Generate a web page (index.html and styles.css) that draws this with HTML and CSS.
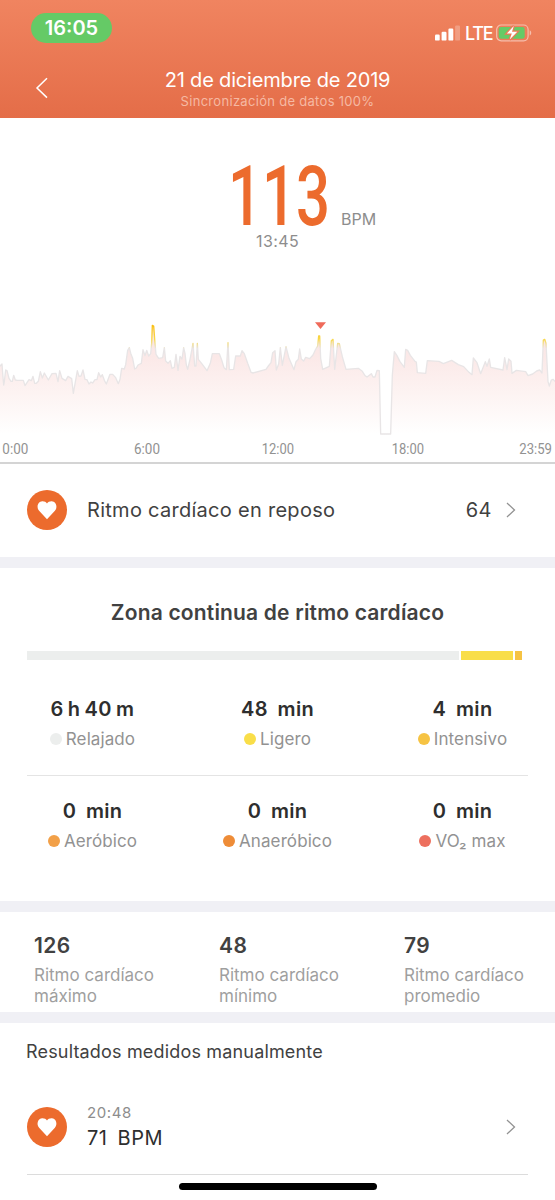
FILE: index.html
```html
<!DOCTYPE html>
<html lang="es">
<head>
    <meta charset="UTF-8">
    <meta name="viewport" content="width=device-width, initial-scale=1.0">
    <title>Ritmo cardíaco</title>
    <link rel="stylesheet" href="styles.css">
</head>
<body>
    <header class="header">
        <div class="status-bar">
            <span class="clock">16:05</span>
            <div class="status-icons">
                <svg class="signal" width="25" height="16" viewBox="0 0 25 16">
                    <rect x="0" y="9.6" width="4.7" height="6" rx="1.2" fill="#fff"/>
                    <rect x="6.6" y="6.7" width="4.9" height="8.9" rx="1.2" fill="#fff"/>
                    <rect x="13.4" y="3.6" width="4.9" height="12" rx="1.2" fill="#fff"/>
                    <rect x="20.1" y="0.4" width="4.9" height="15.2" rx="1.2" fill="#fff" opacity="0.25"/>
                </svg>
                <span class="network">LTE</span>
                <svg class="battery" width="36" height="18" viewBox="0 0 36 18">
                    <rect x="0.7" y="1" width="31.4" height="15.8" rx="4.5" fill="none" stroke="#fff" stroke-opacity="0.5" stroke-width="1.2"/>
                    <rect x="2.7" y="3" width="26" height="11.8" rx="2.4" fill="#65ca66"/>
                    <path d="M33.7 6.3v5.2c2-.8 2-4.4 0-5.2z" fill="#fff" opacity="0.5"/>
                    <path d="M17.8 2L10.8 9.6h5L13.7 15.6 21.3 7.8h-5.3z" fill="#fff" stroke="#eb7a55" stroke-width="2.4"/>
                    <path d="M17.8 2L10.8 9.6h5L13.7 15.6 21.3 7.8h-5.3z" fill="#fff"/>
                </svg>
            </div>
        </div>
        <div class="nav">
            <svg class="back" width="14" height="22" viewBox="0 0 14 22">
                <path d="M12 1.2L2 11l10 9.6" fill="none" stroke="#fff" stroke-width="1.5"/>
            </svg>
            <h1>21 de diciembre de 2019</h1>
            <p>Sincronización de datos 100%</p>
        </div>
    </header>

    <section class="current">
        <div class="bpm">
            <svg width="102" height="64" viewBox="0 0 102 64">
                <text x="-2" y="62" class="big" textLength="102" lengthAdjust="spacingAndGlyphs">113</text>
            </svg>
            <span>BPM</span>
        </div>
        <div class="time">13:45</div>
    </section>

    <svg class="chart" width="555" height="154" viewBox="0 0 1665 462">
        <defs>
            <linearGradient id="area" gradientUnits="userSpaceOnUse" x1="0" y1="46" x2="0" y2="372">
                <stop offset="0" stop-color="#fae3e2"/>
                <stop offset="0.3" stop-color="#fbe9e8"/>
                <stop offset="0.65" stop-color="#fdf4f3"/>
                <stop offset="1" stop-color="#ffffff"/>
            </linearGradient>
            <linearGradient id="line" gradientUnits="userSpaceOnUse" x1="0" y1="46" x2="0" y2="116">
                <stop offset="0" stop-color="#fabf12"/>
                <stop offset="0.6" stop-color="#f8d84a"/>
                <stop offset="1" stop-color="#e8e5e6"/>
            </linearGradient>
        </defs>
        <path fill="url(#area)" stroke="url(#line)" stroke-width="4" stroke-linejoin="round" d="M-10 372V168H0L6 162 8 190 11 225 13 215 17 180 21 182 27 205 33 214 37 214 41 196 46 210 52 211 70 211 75 227 87 209 94 212 99 199 104 220 109 220 115 214 121 185 127 204 133 189 145 210 156 191 168 190 174 215 179 182 186 205 197 212 204 199 215 206 220 250 232 182 237 199 243 198 249 180 255 208 261 209 267 222 273 216 278 219 285 209 291 209 296 188 302 201 307 194 313 211 319 222 330 193 338 193 347 203 355 221 360 208 365 175 373 177 377 164 383 121 388 113 393 133 398 145 404 177 409 174 414 165 424 160 429 119 435 137 440 121 446 138 452 131 455 100 457 46 461 48 465 100 468 133 476 145 488 143 493 113 497 153 504 160 511 152 516 175 523 172 528 133 534 181 540 139 546 147 551 113
            555 130 559 165 563 178 570 148 579 100 584 168 588 168 592 100 595 148 603 158 621 182 631 160 637 131 658 131 665 150 672 173 679 179 684 98 688 179 701 178 707 138 721 138 726 122 733 131 743 160 753 187 759 189 798 178 805 168 813 158 818 128 825 122 829 180 836 162 841 113 847 166 858 110 867 145 882 179 888 155 895 148 899 117 904 147 911 153 917 142 929 146 939 135 947 118 953 108 956 78 959 78 962 145 968 178 988 169 994 92 999 88 1004 178 1013 100 1018 101 1027 140 1038 178 1075 175 1087 184
            1095 197 1101 201 1114 191 1119 201 1125 201 1131 181 1138 182 1142 372 1172 372 1177 195 1183 125 1191 137 1200 155 1213 172 1217 118 1223 121 1231 136 1245 154 1249 156 1252 188 1277 190 1282 152 1317 154 1330 161 1355 151 1375 164 1391 170 1407 187 1416 194 1420 144 1431 158 1442 191 1456 155 1461 169 1468 147 1472 172 1509 180 1514 143 1521 179 1526 147 1533 154 1536 190 1549 181 1577 185 1584 197 1598 192 1610 183 1619 180 1626 189 1630 90 1634 88 1638 100 1644 215 1648 228 1654 210 1659 208 1665 214 1675 214V372"/>
        <path d="M945 37h33l-16.5 20z" fill="#ef6a5a"/>
        <g class="axis">
            <text x="7" y="432" textLength="78" lengthAdjust="spacingAndGlyphs">0:00</text>
            <text x="402" y="432" textLength="78" lengthAdjust="spacingAndGlyphs">6:00</text>
            <text x="785" y="432" textLength="97" lengthAdjust="spacingAndGlyphs">12:00</text>
            <text x="1175" y="432" textLength="97" lengthAdjust="spacingAndGlyphs">18:00</text>
            <text x="1558" y="432" textLength="98" lengthAdjust="spacingAndGlyphs">23:59</text>
        </g>
        <rect x="0" y="457" width="1665" height="4" fill="#bfbfbf"/>
    </svg>

    <section class="resting">
        <svg class="heart" width="40" height="40" viewBox="0 0 40 40">
            <circle cx="20" cy="20" r="20" fill="#ec6b2d"/>
            <path d="M20 29.2L12.1 20.8C9 17.2 10.9 11.4 15.3 11.3 17.4 11.2 19 12.1 20 13.5 21 12.1 22.6 11.2 24.7 11.3 29.1 11.4 31 17.2 27.9 20.8Z" fill="#fff"/>
        </svg>
        <span class="label">Ritmo cardíaco en reposo</span>
        <span class="value">64</span>
        <svg class="arrow" width="10" height="16" viewBox="0 0 10 16">
            <path d="M1 1l7.5 7L1 15" fill="none" stroke="#929292" stroke-width="1.3"/>
        </svg>
    </section>

    <section class="zones">
        <h2>Zona continua de ritmo cardíaco</h2>
        <div class="zone-bar">
            <span class="relaxed"></span>
            <span class="light"></span>
            <span class="intense"></span>
        </div>
        <div class="zone-row">
            <div class="zone">
                <strong class="hours">6 h 40 m</strong>
                <p><i class="relaxed"></i>Relajado</p>
            </div>
            <div class="zone">
                <strong>48 min</strong>
                <p><i class="light"></i>Ligero</p>
            </div>
            <div class="zone">
                <strong>4 min</strong>
                <p><i class="intense"></i>Intensivo</p>
            </div>
        </div>
        <div class="zone-row second">
            <div class="zone">
                <strong>0 min</strong>
                <p><i class="aerobic"></i>Aeróbico</p>
            </div>
            <div class="zone">
                <strong>0 min</strong>
                <p><i class="anaerobic"></i>Anaeróbico</p>
            </div>
            <div class="zone">
                <strong>0 min</strong>
                <p><i class="vo2"></i>VO₂ max</p>
            </div>
        </div>
    </section>

    <section class="stats">
        <div>
            <strong>126</strong>
            <p>Ritmo cardíaco máximo</p>
        </div>
        <div>
            <strong>48</strong>
            <p>Ritmo cardíaco mínimo</p>
        </div>
        <div>
            <strong>79</strong>
            <p>Ritmo cardíaco promedio</p>
        </div>
    </section>

    <section class="manual">
        <h3>Resultados medidos manualmente</h3>
        <div class="result">
            <svg class="heart" width="40" height="40" viewBox="0 0 40 40">
                <circle cx="20" cy="20" r="20" fill="#ec6b2d"/>
                <path d="M20 29.2L12.1 20.8C9 17.2 10.9 11.4 15.3 11.3 17.4 11.2 19 12.1 20 13.5 21 12.1 22.6 11.2 24.7 11.3 29.1 11.4 31 17.2 27.9 20.8Z" fill="#fff"/>
            </svg>
            <div class="result-text">
                <span class="result-time">20:48</span>
                <span class="result-value">71 BPM</span>
            </div>
            <svg class="arrow" width="10" height="16" viewBox="0 0 10 16">
                <path d="M1 1l7.5 7L1 15" fill="none" stroke="#929292" stroke-width="1.3"/>
            </svg>
        </div>
        <div class="home-bar"></div>
    </section>
</body>
</html>
```
FILE: styles.css
```css
* {
    box-sizing: border-box;
    margin: 0;
    padding: 0;
}

body {
    width: 555px;
    height: 1200px;
    overflow: hidden;
    font-family: Inter, "Liberation Sans", sans-serif;
    background-color: #fff;
    color: #414141;
}

svg {
    display: block;
    flex: none;
}

.header {
    height: 118px;
    background: linear-gradient(#f08460, #e46d48);
    color: white;
}

.status-bar {
    height: 57px;
    padding: 13px 23px 0 31px;
    display: flex;
    justify-content: space-between;
}

.clock {
    width: 81px;
    height: 30px;
    border-radius: 15px;
    background-color: #65ca66;
    font-size: 20px;
    font-weight: 600;
    line-height: 31px;
    text-align: center;
}

.status-icons {
    display: flex;
    align-items: center;
    height: 40px;
}

.network {
    width: 27px;
    margin: 0 4px;
    font-size: 18px;
    font-weight: 500;
    letter-spacing: -1.2px;
}

.signal {
    margin-right: 1px;
}

.nav {
    display: grid;
    grid-template-columns: 36px 1fr 36px;
    padding: 11px 0 0;
    text-align: center;
}

.nav h1, .nav p {
    grid-column: 1 / 4;
}

.nav h1 {
    grid-row: 1;
    font-size: 20px;
    font-weight: 400;
    line-height: 24px;
    letter-spacing: -0.17px;
}

.nav p {
    font-size: 13px;
    line-height: 18px;
    letter-spacing: 0.3px;
    color: #f5b9a3;
}

.back {
    grid-row: 1;
    grid-column: 1;
    margin: 9px 0 -9px 35px;
}

.current {
    height: 192px;
    padding-top: 45px;
}

.bpm {
    display: flex;
    align-items: flex-end;
    margin-left: 230px;
    height: 64px;
}

.bpm svg {
    overflow: visible;
}

.bpm span {
    margin-left: 9px;
    font-size: 16px;
    line-height: 16px;
    color: #8d8d8d;
}

.big {
    font-family: Roboto, sans-serif;
    font-size: 84px;
    font-weight: 500;
    fill: #ec6b2d;
}

.time {
    padding-top: 4px;
    text-align: center;
    font-size: 16px;
    line-height: 20px;
    letter-spacing: 0.4px;
    color: #8d8d8d;
}

.axis {
    font-family: Roboto, sans-serif;
    font-size: 44px;
    fill: #929292;
}

.resting {
    display: flex;
    align-items: center;
    height: 93px;
    padding: 0 39px 2px 27px;
    font-size: 20px;
}

.resting .label {
    margin-left: 20px;
    flex: 1;
    letter-spacing: 0.28px;
}

.resting .value {
    margin-right: 14px;
    letter-spacing: 0.5px;
}

.zones {
    height: 355px;
    border-top: 11px solid #f0f0f5;
    border-bottom: 11px solid #f0f0f5;
    padding: 31px 27px 0;
}

.zones h2 {
    font-size: 21px;
    font-weight: 600;
    line-height: 28px;
    letter-spacing: 0.18px;
    text-align: center;
}

.zone-bar {
    display: grid;
    grid-template-columns: 432px 52px 7px;
    gap: 2px;
    height: 9px;
    margin-top: 24px;
}

.relaxed { background-color: #eceeed; }
.light { background-color: #f9de49; }
.intense { background-color: #f6c343; }
.aerobic { background-color: #f2a048; }
.anaerobic { background-color: #ee8c37; }
.vo2 { background-color: #ed6f5e; }

.zone-row {
    display: grid;
    grid-template-columns: repeat(3, 185px);
    margin: 0 -27px;
    padding-top: 36px;
    height: 115px;
    text-align: center;
}

.zone-row.second {
    position: relative;
    padding-top: 23px;
}

.zone-row.second::before {
    content: "";
    position: absolute;
    top: 0;
    left: 27px;
    right: 27px;
    height: 1px;
    background-color: #e4e4e4;
}

.zone strong {
    display: block;
    font-size: 20px;
    font-weight: 600;
    line-height: 26px;
    letter-spacing: 0.3px;
    color: #2e2e2e;
    word-spacing: 4.5px;
}

.zone .hours {
    letter-spacing: 0.5px;
    word-spacing: -1.6px;
}

.zone p {
    display: flex;
    align-items: center;
    justify-content: center;
    gap: 4px;
    padding-top: 5px;
    font-size: 17px;
    line-height: 24px;
    letter-spacing: 0.1px;
    color: #929292;
}

.zone i {
    width: 12px;
    height: 12px;
    border-radius: 50%;
}

.stats {
    display: grid;
    grid-template-columns: repeat(3, 185px);
    height: 111px;
    padding-top: 20px;
    border-bottom: 11px solid #f0f0f5;
}

.stats div {
    padding: 0 30px 0 34px;
}

.stats strong {
    display: block;
    font-size: 21px;
    font-weight: 600;
    line-height: 27px;
    letter-spacing: 0.4px;
}

.stats p {
    width: 130px;
    padding-top: 6px;
    font-size: 17px;
    line-height: 21px;
    color: #9f9f9f;
}

.manual h3 {
    padding: 17px 0 0 26px;
    font-size: 18px;
    font-weight: 400;
    line-height: 24px;
    letter-spacing: 0.17px;
}

.result {
    display: flex;
    align-items: center;
    height: 111px;
    margin: 0 27px;
    padding: 15px 12px 0 0;
    border-bottom: 1px solid #dcdcdc;
}

.result-text {
    flex: 1;
    display: flex;
    flex-direction: column;
    margin-left: 20px;
}

.result-time {
    font-size: 15px;
    line-height: 22px;
    letter-spacing: 0.6px;
    color: #8d8d8d;
}

.result-value {
    font-size: 20px;
    line-height: 28px;
    letter-spacing: 0.5px;
    word-spacing: 4px;
    color: #2e2e2e;
}

.home-bar {
    width: 198px;
    height: 7px;
    margin: 8px auto 0;
    border-radius: 4px;
    background-color: #000;
}
```
